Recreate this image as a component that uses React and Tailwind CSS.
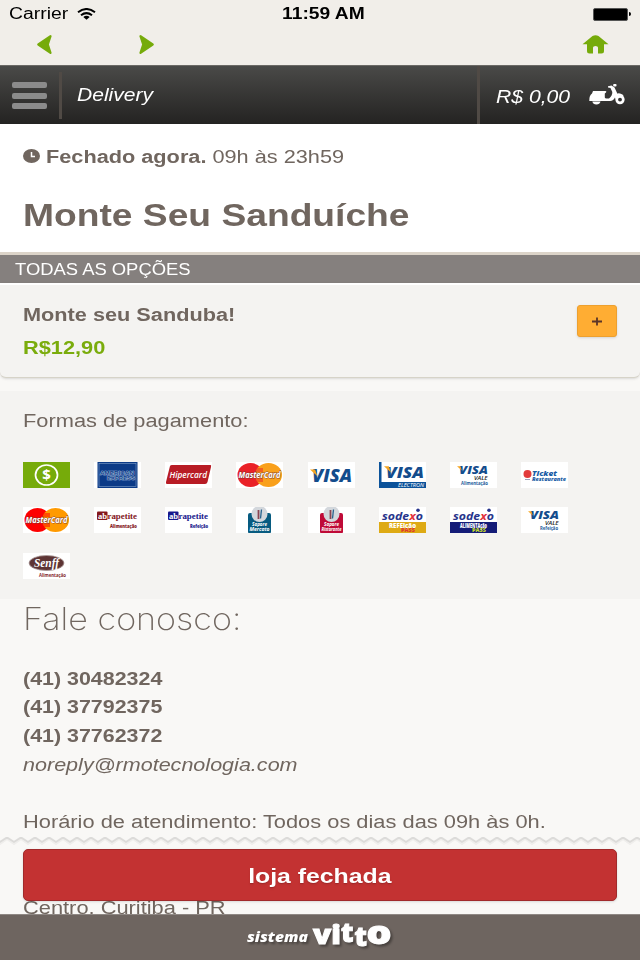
import clsx from "clsx";

// Helvetica-like text, rendered a bit wider than normal
function Wide({ className, children }) {
  return (
    <span className={clsx("inline-block whitespace-nowrap", className)}>
      {children}
    </span>
  );
}

function StatusBar() {
  return (
    <div className="h-[65px] bg-[#f1eee9]">
      <div className="flex h-7 items-center justify-between pl-[9px] pr-[9px] text-black">
        <div className="flex w-[120px] items-center">
          <span className="w-[60px] text-[16px]">
            <Wide className="origin-left scale-x-[1.21]">Carrier</Wide>
          </span>
          <svg className="ml-[8px] h-[12px] w-[19px]" viewBox="0 0 19 12">
            <path d="M1 4.2Q9.500 -2.200 18 4.200" fill="none" stroke="#000" strokeWidth="2" />
            <path d="M4 7.300Q9.500 2.900 15 7.300" fill="none" stroke="#000" strokeWidth="2" />
            <path d="M6.300 8.900Q9.500 6.800 12.700 8.900L9.500 11.800Z" fill="#000" />
          </svg>
        </div>
        <span className="pl-[6px] text-[16px] font-bold">
          <Wide className="scale-x-[1.2]">11:59 AM</Wide>
        </span>
        <div className="flex w-[120px] items-center justify-end">
          <div className="h-[13px] w-[35px] rounded-[2px] border border-[#555] bg-black" />
          <div className="ml-px h-1 w-[2px] rounded-r bg-black" />
        </div>
      </div>
      <div className="flex items-center pl-[37px] pt-[7px]">
        <svg className="h-[19px] w-[15px]" viewBox="0 0 15 19">
          <path d="M13.500 1.200L1.300 9.500L13.500 17.800L10.800 9.500Z" fill="#76ab0a" stroke="#76ab0a" strokeWidth="2.200" strokeLinejoin="round" />
        </svg>
        <svg className="ml-[87px] h-[19px] w-[15px]" viewBox="0 0 15 19">
          <path d="M1.500 1.200L13.700 9.500L1.500 17.800L4.200 9.500Z" fill="#76ab0a" stroke="#76ab0a" strokeWidth="2.200" strokeLinejoin="round" />
        </svg>
        <svg className="ml-auto mr-[31px] h-[19px] w-[27px]" viewBox="0 0 27 19">
          <path d="M10.500 1Q13.500 -0.600 16.500 1L26.500 9.300H22V16Q22 18.500 19.500 18.500H16V12.500Q16 11 13.500 11Q11 11 11 12.500V18.500H7.500Q5 18.500 5 16V9.300H0.500Z" fill="#76ab0a" />
        </svg>
      </div>
    </div>
  );
}

function Scooter() {
  return (
    <svg className="h-[22px] w-[37px]" viewBox="0 0 37 22">
      <g fill="#fff">
        <path d="M4 8H16.500Q18 8.300 17 9.500L15.800 10.500V14.500Q16 15.500 17.500 15.500H20Q23.500 12.500 23.300 9L21.500 5L19 4.600V3.200L22.500 2.500L25.500 4.500L29 12L26.500 13.500Q24.500 18 21 18H0.300Q0 12.500 3 10.500Z" />
        <path d="M3.300 18.500H11.500Q10.800 21.400 7.400 21.400Q4 21.400 3.300 18.500Z" />
        <rect x="24.200" y="1" width="3.300" height="2.600" rx="0.800" />
        <path d="M25.500 13Q27.500 9.800 31 10.500Q34 10.800 35 13.500L30 12.500L26.500 16Z" />
      </g>
      <circle cx="31" cy="16.600" r="3.300" fill="none" stroke="#fff" strokeWidth="2.700" />
    </svg>
  );
}

function Header() {
  return (
    <header className="flex h-[59px] border-t border-[#6b6965] bg-linear-to-b from-[#4a4a48] to-[#242322] text-[18px] italic text-white">
      <div className="flex w-[59px] flex-col gap-[4.5px] pl-3 pt-4">
        <div className="h-[6px] w-[35px] rounded-[2px] bg-[#8b8b8b]" />
        <div className="h-[6px] w-[35px] rounded-[2px] bg-[#8b8b8b]" />
        <div className="h-[6px] w-[35px] rounded-[2px] bg-[#8b8b8b]" />
      </div>
      <div className="mt-[6px] h-[47px] w-[3px] bg-[#504a45]" />
      <div className="pl-[15px] pt-[15px] leading-7">
        <Wide className="origin-left scale-x-[1.17]">Delivery</Wide>
      </div>
      <div className="ml-auto flex w-[163px] border-l-3 border-[#504a45] pl-4 pt-[17px] leading-7">
        <div className="w-[93px]">
          <Wide className="origin-left scale-x-[1.175]">R$ 0,00</Wide>
        </div>
        <Scooter />
      </div>
    </header>
  );
}

function StoreInfo() {
  return (
    <section className="h-[131px] border-b-3 border-[#dcd4c9] bg-white pl-[23px] pt-[19px]">
      <div className="flex items-center text-[18px] leading-7">
        <svg className="mb-[3px] mr-[6px] h-[14px] w-[17px]" viewBox="0 0 17 14">
          <ellipse cx="8.500" cy="7" rx="8.500" ry="7" fill="#70665f" />
          <path d="M8.500 3V7.500H12" fill="none" stroke="#fff" strokeWidth="1.500" />
        </svg>
        <Wide className="origin-left scale-x-[1.206]">
          <b>Fechado agora.</b> 09h às 23h59
        </Wide>
      </div>
      <h1 className="mt-[25px] text-[31px] font-bold leading-10">
        <Wide className="origin-left scale-x-[1.2]">Monte Seu Sanduíche</Wide>
      </h1>
    </section>
  );
}

function Product() {
  return (
    <section>
      <h2 className="h-7 bg-[#85807e] pl-[15px] pt-px text-[16px] leading-7 text-white">
        <Wide className="origin-left scale-x-[1.15]">TODAS AS OPÇÕES</Wide>
      </h2>
      <div className="flex h-[95px] justify-between rounded-b-md border-b border-t-2 border-b-[#d6d3c8] border-t-white bg-[#f4f3f1] px-[23px] font-bold shadow-sm">
        <div className="pt-[14px] text-[18px] leading-[32.5px]">
          <p>
            <Wide className="origin-left scale-x-[1.206]">Monte seu Sanduba!</Wide>
          </p>
          <p className="text-[#7aac0c]">
            <Wide className="origin-left scale-x-[1.21]">R$12,90</Wide>
          </p>
        </div>
        <button className="mt-5 flex h-8 w-10 items-center justify-center rounded-[3px] border border-[#eda02f] bg-[#ffad33] shadow-sm">
          <svg className="h-[9px] w-[10px]" viewBox="0 0 10 9">
            <path d="M0 4.500H10M5 0.500V8.500" stroke="#5b3528" strokeWidth="1.800" />
          </svg>
        </button>
      </div>
    </section>
  );
}

function Visa({ x, y, size, width }) {
  return (
    <>
      <text x={x} y={y} fontSize={size} textLength={width} lengthAdjust="spacingAndGlyphs" fontFamily="Open Sans" fontWeight="800" fontStyle="italic" fill="#134c8c">
        VISA
      </text>
      <path d={`M${x - 2} ${y - size * 0.71}h${size * 0.3}l${size * 0.14} ${size * 0.4}z`} fill="#f5a623" />
    </>
  );
}

function MasterCard({ left, right }) {
  return (
    <>
      <ellipse cx="14.500" cy="13" rx="13" ry="12" fill={left} />
      <ellipse cx="32.500" cy="13" rx="13.500" ry="12" fill={right} />
      <path d="M19 7h8M19 9h8M19 17h8M20 19h7" stroke={left} strokeWidth="1" />
      <text x="2.500" y="16.300" fontSize="9" textLength="42" lengthAdjust="spacingAndGlyphs" fontFamily="Open Sans" fontWeight="700" fontStyle="italic" fill="#fff" stroke="#7a3a30" strokeWidth="0.900" paintOrder="stroke">
        MasterCard
      </text>
    </>
  );
}

function Abrapetite({ color, label, width }) {
  return (
    <>
      <rect x="3" y="4.500" width="10.500" height="8.500" rx="1" fill={color} />
      <text x="4" y="11.500" fontSize="8" textLength="9" lengthAdjust="spacingAndGlyphs" fontFamily="Liberation Serif" fontWeight="700" fill="#fff">
        ab
      </text>
      <text x="13.500" y="11.500" fontSize="8.500" textLength="29.500" lengthAdjust="spacingAndGlyphs" fontFamily="Liberation Serif" fontWeight="700" fill={color}>
        rapetite
      </text>
      <text x={43 - width} y="20.500" fontSize="5" textLength={width} lengthAdjust="spacingAndGlyphs" fontFamily="Open Sans" fontWeight="800" fill={color}>
        {label}
      </text>
    </>
  );
}

function Sapore({ color, label }) {
  return (
    <>
      <rect x="12" y="6" width="23" height="20.500" rx="2" fill={color} />
      <circle cx="23.500" cy="7" r="8" fill="#d3d7dc" />
      <path d="M22.500 3v9" stroke="#8a4552" strokeWidth="1.800" />
      <path d="M25.500 2.500l-1 9" stroke="#27628d" strokeWidth="1.300" />
      <g fontFamily="Open Sans" fontWeight="700" fontStyle="italic" fontSize="4.500" fill="#fff">
        <text x="16" y="19.300" textLength="15" lengthAdjust="spacingAndGlyphs">Sapore</text>
        <text x="13.500" y="24.300" textLength="20" lengthAdjust="spacingAndGlyphs">{label}</text>
      </g>
    </>
  );
}

function Sodexo({ color, first, second, secondColor }) {
  return (
    <>
      <text x="3" y="12.500" fontSize="11" textLength="41" lengthAdjust="spacingAndGlyphs" fontFamily="Open Sans" fontWeight="700" fontStyle="italic" fill="#27348b">
        sode<tspan fill="#e2323c">x</tspan>o
      </text>
      <circle cx="39" cy="3.300" r="1.800" fill="#27348b" />
      <rect y="15" width="47" height="11.500" fill={color} />
      <g fontFamily="Open Sans" fontWeight="800">
        <text x="10" y="20.800" fontSize="6" textLength="27" lengthAdjust="spacingAndGlyphs" fill="#fff">{first}</text>
        <text x="22" y="25" fontSize="4.500" textLength="14" lengthAdjust="spacingAndGlyphs" fill={secondColor}>{second}</text>
      </g>
    </>
  );
}

function VisaVale({ label, x, width }) {
  return (
    <>
      <Visa x={9} y={12} size={11} width={29} />
      <text x="24" y="17.600" fontSize="5" textLength="13.500" lengthAdjust="spacingAndGlyphs" fontFamily="Open Sans" fontWeight="600" fontStyle="italic" fill="#222">
        VALE
      </text>
      <text x={x} y="22.600" fontSize="4.800" textLength={width} lengthAdjust="spacingAndGlyphs" fontFamily="Open Sans" fontWeight="700" fill="#1d5c9c">
        {label}
      </text>
    </>
  );
}

const cards = [
  <>
    <rect width="47" height="26" fill="#76ab0a" />
    <ellipse cx="23.500" cy="13" rx="11" ry="10" fill="none" stroke="#fff" strokeWidth="1.700" />
    <text x="23.500" y="18.200" fontSize="15" textAnchor="middle" fontFamily="Open Sans" fontWeight="700" fill="#fff">$</text>
  </>,
  <>
    <rect x="3.500" width="40" height="26" fill="#0b3a87" />
    <rect x="5" y="1.500" width="37" height="23" fill="none" stroke="#7f9fc9" strokeWidth="0.600" />
    <g fontFamily="Liberation Sans" fontWeight="700" fontSize="5" fill="#0b3a87" stroke="#b4c8e4" strokeWidth="0.700" paintOrder="stroke">
      <text x="6" y="12.500" textLength="34" lengthAdjust="spacingAndGlyphs">AMERICAN</text>
      <text x="13" y="17.500" textLength="28" lengthAdjust="spacingAndGlyphs">EXPRESS</text>
    </g>
  </>,
  <>
    <path d="M5 4Q5.500 3 7 3H45.500Q46.500 3 46 5L42.500 20Q42 22 40 22H2Q0.500 22 1 20Z" fill="#b81c25" />
    <text x="4.500" y="15.500" fontSize="8.500" textLength="37.500" lengthAdjust="spacingAndGlyphs" fontFamily="Open Sans" fontWeight="600" fontStyle="italic" fill="#fff">Hipercard</text>
  </>,
  <MasterCard left="#ea2127" right="#f9a01b" />,
  <Visa x={4} y={19.5} size={17} width={40} />,
  <>
    <rect width="2.500" height="26" fill="#0b529a" />
    <rect y="20" width="47" height="6" fill="#0b529a" />
    <Visa x={7} y={15.5} size={16} width={38} />
    <text x="19" y="24.700" fontSize="4.800" textLength="26" lengthAdjust="spacingAndGlyphs" fontFamily="Open Sans" fontStyle="italic" fill="#fff">ELECTRON</text>
  </>,
  <VisaVale label="Alimentação" x={11} width={27} />,
  <>
    <circle cx="6.500" cy="12" r="4" fill="#e23b3b" />
    <path d="M4 17.500h5" stroke="#88a" strokeWidth="0.800" />
    <g fontFamily="Open Sans" fontWeight="800" fontStyle="italic" fill="#1a5ca5">
      <text x="11" y="14" fontSize="7" textLength="25" lengthAdjust="spacingAndGlyphs">Ticket</text>
      <text x="11" y="18.500" fontSize="5" textLength="34" lengthAdjust="spacingAndGlyphs">Restaurante</text>
    </g>
  </>,
  <MasterCard left="#fe0000" right="#ff9a00" />,
  <Abrapetite color="#84171c" label="Alimentação" width={27} />,
  <Abrapetite color="#17178c" label="Refeição" width={18} />,
  <Sapore color="#075b80" label="Mercato" />,
  <Sapore color="#bf0a37" label="Ristorante" />,
  <Sodexo color="#deaa14" first="REFEIção" second="PASS" secondColor="#e0362c" />,
  <Sodexo color="#141b77" first="ALIMENTAção" second="PASS" secondColor="#c2d82e" />,
  <VisaVale label="Refeição" x={19} width={18} />,
  <>
    <ellipse cx="23.500" cy="10" rx="17.500" ry="7.500" fill="#5d3434" stroke="#a99" strokeWidth="0.800" />
    <text x="11" y="14" fontSize="12" textLength="25" lengthAdjust="spacingAndGlyphs" fontFamily="Liberation Serif" fontWeight="700" fontStyle="italic" fill="#fff">Senff</text>
    <text x="16" y="24.300" fontSize="5" textLength="27" lengthAdjust="spacingAndGlyphs" fontFamily="Open Sans" fontWeight="700" fill="#84272c">Alimentação</text>
  </>,
];

function Payments() {
  return (
    <section className="mt-[13px] h-[208px] bg-[#f4f3f1] pl-[23px] pt-4">
      <p className="text-[18px] leading-7">
        <Wide className="origin-left scale-x-[1.212]">Formas de pagamento:</Wide>
      </p>
      <div className="mt-[27px] grid w-[569px] grid-cols-8 gap-y-[19.3px]">
        {cards.map((card, index) => (
          <svg key={index} className="h-[26px] w-[47px] bg-white" viewBox="0 0 47 26">
            {card}
          </svg>
        ))}
      </div>
    </section>
  );
}

function Contact() {
  const phones = ["(41) 30482324", "(41) 37792375", "(41) 37762372"];

  return (
    <section className="pl-[23px] text-[18px] leading-[28.7px]">
      <h3 className="mb-[25.6px] font-[Inter,sans-serif] text-[31px] font-extralight leading-10">
        <Wide className="origin-left scale-x-[1.1]">Fale conosco:</Wide>
      </h3>
      {phones.map((phone) => (
        <p key={phone} className="font-bold">
          <Wide className="origin-left scale-x-[1.19]">{phone}</Wide>
        </p>
      ))}
      <p className="italic">
        <Wide className="origin-left scale-x-[1.197]">noreply@rmotecnologia.com</Wide>
      </p>
      <p className="mt-[28.7px]">
        <Wide className="origin-left scale-x-[1.213]">
          Horário de atendimento: Todos os dias das 09h às 0h.
        </Wide>
      </p>
      <p className="mt-[57.4px]">
        <Wide className="origin-left scale-x-[1.213]">Centro, Curitiba - PR</Wide>
      </p>
    </section>
  );
}

function Footer() {
  return (
    <div className="absolute inset-x-0 bottom-0">
      <svg className="block h-[12px] w-full" viewBox="0 0 640 12">
        <defs>
          <pattern id="zigzag" width="14" height="12" patternUnits="userSpaceOnUse">
            <path d="M-1 5.200L0 6L7 1L14 6L15 5.200" fill="none" stroke="#efeeec" strokeWidth="3.500" />
            <path d="M-1 4.200L0 5L7 0.500L14 5L15 4.200" fill="none" stroke="#dcdbd9" strokeWidth="1.800" />
          </pattern>
        </defs>
        <rect width="640" height="12" fill="url(#zigzag)" />
      </svg>
      <div className="px-[23px] pb-[13px]">
        <button className="flex h-[52px] w-full items-center justify-center rounded-[5px] border border-[#a12a2b] bg-[#c33232] pt-[2px] text-[20px] font-bold text-white shadow-sm text-shadow-sm">
          <Wide className="scale-x-[1.24]">loja fechada</Wide>
        </button>
      </div>
      <div className="flex h-[46px] justify-center border-t border-[#8f8884] bg-[#6e6560]">
        <svg className="h-[40px] w-[150px] drop-shadow-[2px_2px_1px_rgba(0,0,0,0.35)]" viewBox="0 0 150 40">
          <g fontFamily="Open Sans" fontWeight="800" fill="#fff">
            <text x="2" y="26.500" fontSize="14" fontStyle="italic" textLength="61" lengthAdjust="spacingAndGlyphs">sistema</text>
            <g stroke="#fff" strokeWidth="1">
              <text x="68" y="28.500" fontSize="27" textLength="28" lengthAdjust="spacingAndGlyphs">vi</text>
              <text x="96" y="26.500" fontSize="27">t</text>
              <text x="109.500" y="31" fontSize="27">t</text>
              <text x="121.500" y="28.500" fontSize="31" textLength="25" lengthAdjust="spacingAndGlyphs">o</text>
            </g>
          </g>
        </svg>
      </div>
    </div>
  );
}

export default function App() {
  return (
    <main className="relative h-[960px] w-[640px] overflow-hidden bg-[#f9f8f6] font-['Liberation_Sans',Arial,sans-serif] text-[#70665f]">
      <StatusBar />
      <Header />
      <StoreInfo />
      <Product />
      <Payments />
      <Contact />
      <Footer />
    </main>
  );
}
